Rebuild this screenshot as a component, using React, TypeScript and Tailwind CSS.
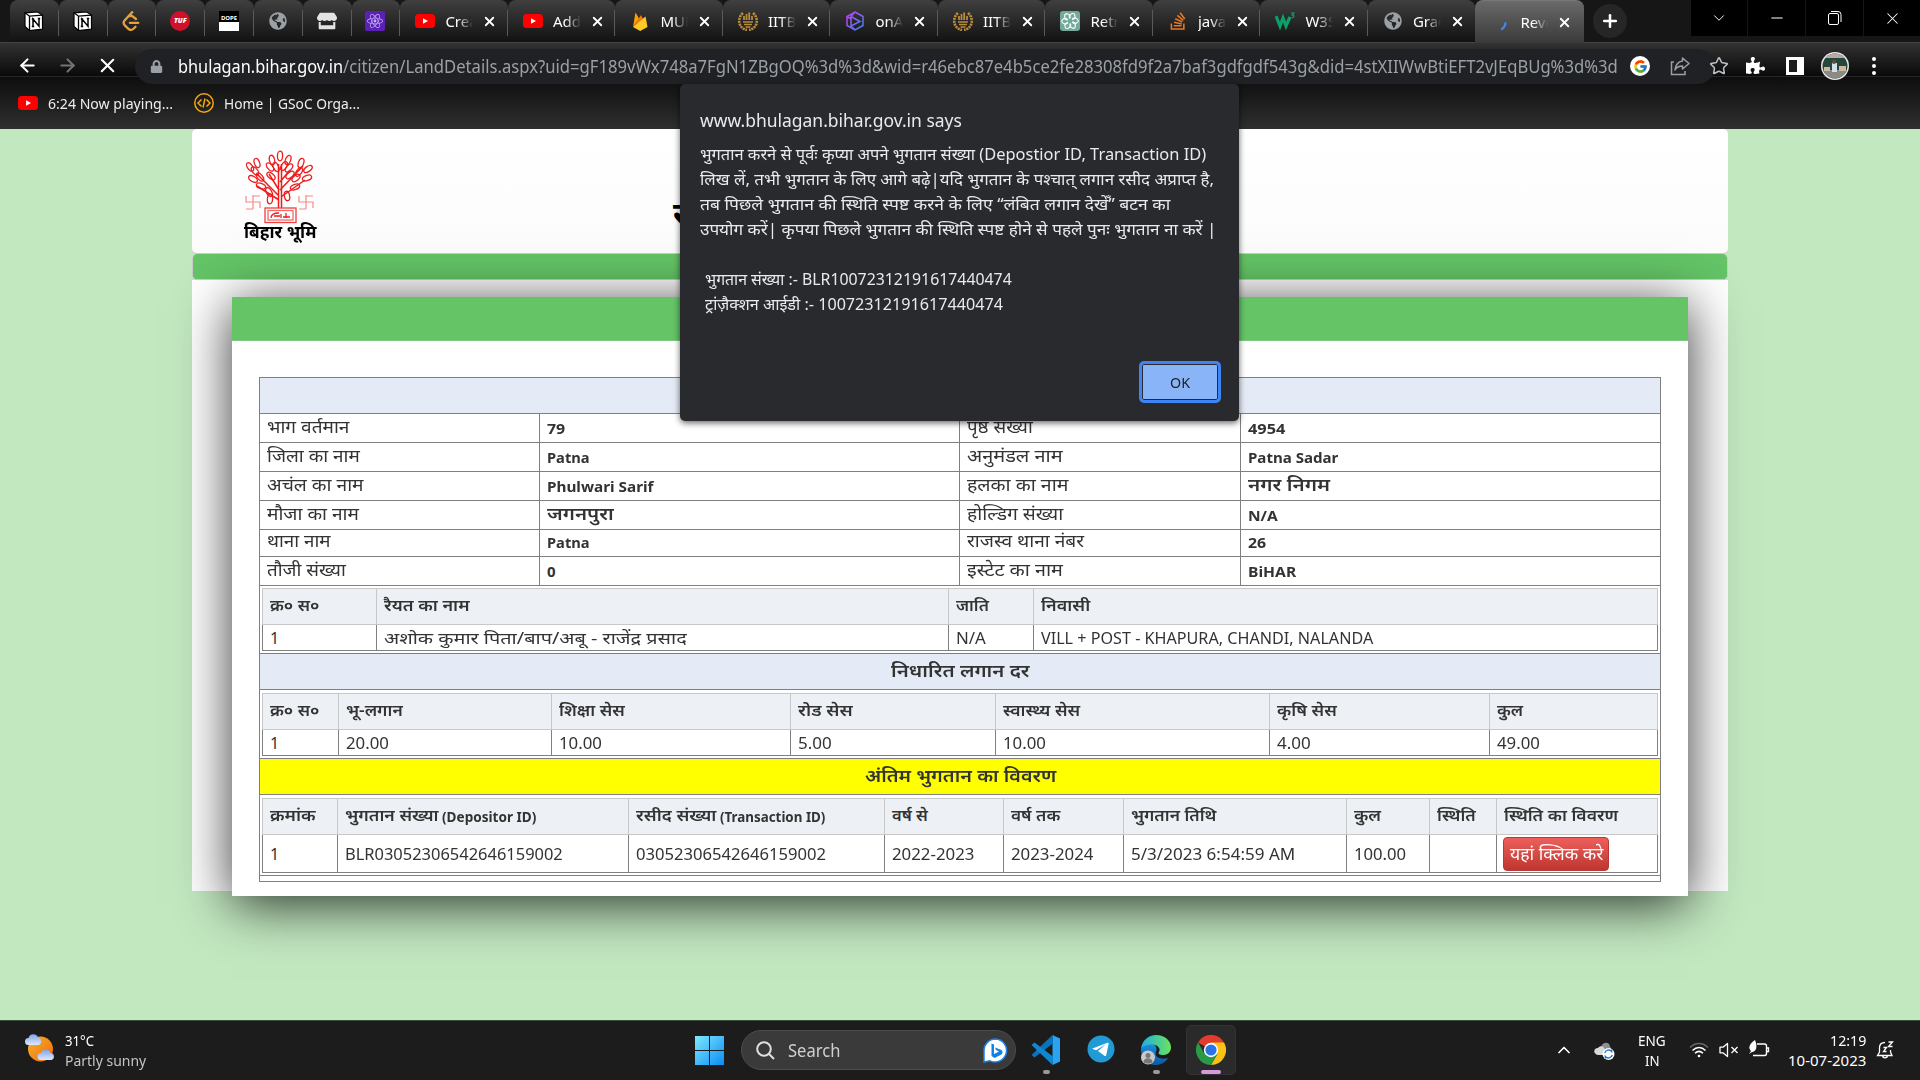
import { useLayoutEffect, useRef, useState, type ReactNode } from "react";
import { FcGoogle } from "react-icons/fc";
import { SiLeetcode } from "react-icons/si";
import { FaStackOverflow, FaReact, FaStore, FaGlobeAmericas, FaPuzzlePiece, FaLock } from "react-icons/fa";
import { ArrowLeft, ArrowRight, X, Star, ChevronDown, ChevronUp, Plus, Minus } from "lucide-react";

/* Single line of text squeezed or stretched to a fixed advance width. */
function Fit({ w, children, className = "" }: { w: number; children: ReactNode; className?: string }) {
  const ref = useRef<HTMLSpanElement>(null);
  const [scale, setScale] = useState(1);
  useLayoutEffect(() => {
    if (ref.current && ref.current.offsetWidth > 0) setScale(w / ref.current.offsetWidth);
  }, [w, children]);
  return (
    <span className={"inline-flex shrink-0 " + className} style={{ width: w }}>
      <span ref={ref} className="inline-block shrink-0 origin-left whitespace-nowrap" style={{ transform: `scaleX(${scale})` }}>
        {children}
      </span>
    </span>
  );
}

/* ---------- favicons ---------- */
const Notion = () => (
  <svg viewBox="0 0 20 20" className="size-5">
    <path d="M1 1.8 13.5.8 18.5 4.2V18.2L5.5 19.5 1 15.5Z" fill="#fff" stroke="#000" strokeWidth="1.2" />
    <path d="M1 1.8 5.5 5.2 18.5 4.2M5.5 5.2V19.5" stroke="#000" fill="none" strokeWidth="1.3" />
    <path d="M9 15.5V8L15 15.2V7.6M7.8 8H10.2M13.8 7.6H16.2M7.8 15.5H10.2" stroke="#000" fill="none" strokeWidth="1.5" />
  </svg>
);
const YouTube = () => (
  <svg viewBox="0 0 20 20" className="size-5 shrink-0">
    <rect x="0" y="3" width="20" height="14" rx="3.5" fill="#f00" />
    <path d="M8 7.2v5.6L13 10Z" fill="#fff" />
  </svg>
);
const Tuf = () => (
  <span className="flex size-5 items-center justify-center rounded-full bg-[#d0112b] text-[7px] font-black italic text-white">TUF</span>
);
const Dope = () => (
  <span className="flex h-5 w-5 flex-col bg-white">
    <span className="flex h-[11px] items-end justify-center bg-black text-[6px] leading-[7px] font-bold text-white">DOPE</span>
  </span>
);
const Firebase = () => (
  <svg viewBox="0 0 20 20" className="size-5">
    <path d="M3 16 5.5 1.5 9 7.5Z" fill="#ffa000" />
    <path d="M3 16 11 4 13 8Z" fill="#f57c00" />
    <path d="M3 16 15.5 5.5 17.5 16 10.2 20Z" fill="#ffca28" />
  </svg>
);
const Iitb = () => (
  <svg viewBox="0 0 20 20" className="size-5" fill="none" stroke="#b98b3c">
    <path d="M5 2C-1 7 0 17 9 19M15 2c6 5 5 15-4 17" strokeWidth="2.6" strokeDasharray="2.2 .7" />
    <path d="M6 9V5M8.5 9V3M11.2 9V1.5M14 9V5" strokeWidth="1.8" />
    <path d="M5 11h10M6 13.5h8M7.5 16h5" strokeWidth="1.3" />
  </svg>
);
const OnA = () => (
  <svg viewBox="0 0 20 20" className="size-5" fill="none" stroke="url(#oa)" strokeWidth="1.5">
    <defs>
      <linearGradient id="oa" x2="1" y2="1">
        <stop stopColor="#c43cf0" />
        <stop offset="1" stopColor="#3f86f7" />
      </linearGradient>
    </defs>
    <path d="M10 1 18 5.5V14.5L10 19 2 14.5V5.5Z" />
    <path d="M6 5.5 15 10.5 6 15ZM6 5.5 10 1M6 15l4 4M2 5.5 6 8" />
  </svg>
);
const Gpt = () => (
  <svg viewBox="0 0 20 20" className="size-5">
    <rect width="20" height="20" rx="3" fill="#74aa9c" />
    <g fill="none" stroke="#fff" strokeWidth="1.1">
      {[0, 60, 120, 180, 240, 300].map((a) => (
        <path key={a} d="M10 7.6V5.2a2.8 2.8 0 0 1 4.6-2l.6 3L12 8.2" transform={`rotate(${a} 10 10)`} />
      ))}
    </g>
  </svg>
);
const W3 = () => (
  <span className="flex w-5 items-start text-[#0d9f68]">
    <svg viewBox="0 0 20 20" className="size-5" fill="none" stroke="#0d9f68">
      <path d="M1 5 5 15 8 7l3 8L15 6" strokeWidth="3.2" />
      <path d="M16 2h3l-1.8 2c2.5 0 2.3 3-.7 2.5" strokeWidth="1.2" />
    </svg>
  </span>
);
const Globe = () => <FaGlobeAmericas className="size-[18px] text-[#9aa0a6]" />;
const Spinner = () => (
  <svg viewBox="0 0 20 20" className="size-5">
    <path d="M15.5 11c-.3 3-1.8 4.800-3.500 6" stroke="#4285f4" strokeWidth="2.200" fill="none" strokeLinecap="round" />
  </svg>
);

const pinned: ReactNode[] = [
  <Notion />,
  <Notion />,
  <SiLeetcode className="size-5 text-[#e8a13a]" />,
  <Tuf />,
  <Dope />,
  <Globe />,
  <FaStore className="size-5 text-[#e3e3e3]" />,
  <span className="flex size-5 items-center justify-center rounded-[2px] bg-[#5b21b6]">
    <FaReact className="size-4 text-[#c9b6f5]" />
  </span>,
];
const tabs: [ReactNode, string][] = [
  [<YouTube />, "Creat"],
  [<YouTube />, "Add t"],
  [<Firebase />, "MUN"],
  [<Iitb />, "IITBH"],
  [<OnA />, "onAu"],
  [<Iitb />, "IITBH"],
  [<Gpt />, "Retric"],
  [<FaStackOverflow className="size-5 text-[#e87922]" />, "javasc"],
  [<W3 />, "W3Sc"],
  [<Globe />, "Grad"],
];

function TabBody({ icon, label }: { icon: ReactNode; label: string }) {
  return (
    <>
      <span className="flex w-5 shrink-0 justify-center">{icon}</span>
      <span className="ml-[10px] w-7 overflow-hidden text-[15px] whitespace-nowrap text-white [mask-image:linear-gradient(90deg,#000_45%,transparent)]">
        {label}
      </span>
      <X className="ml-[9px] size-[15px] shrink-0 text-white" strokeWidth={2.900} />
    </>
  );
}

function TabStrip() {
  return (
    <div className="flex h-[42px] items-start bg-[#161616] pl-[10px]">
      {pinned.map((icon, i) => (
        <div key={i} className="flex h-[42px] w-[48.800px] items-center rounded-t-lg bg-linear-to-b from-[#404040] to-[#121212]">
          <span className="flex flex-1 justify-center">{icon}</span>
          <span className="mt-1 h-[26px] w-px bg-[#5a5a5a]" />
        </div>
      ))}
      {tabs.map(([icon, label], i) => (
        <div key={i} className="flex h-[42px] w-[107.500px] items-center rounded-t-lg bg-linear-to-b from-[#404040] to-[#121212] pl-[15px]">
          <TabBody icon={icon} label={label} />
          <span className={i === 9 ? "hidden" : "mt-1 ml-auto h-[26px] w-px bg-[#5a5a5a]"} />
        </div>
      ))}
      <div className="flex h-[43px] w-[109px] items-center rounded-t-lg border-t border-[#777] bg-linear-to-b from-[#6a6a6a] to-[#3a3a3a] pl-[15px]">
        <TabBody icon={<Spinner />} label="Reve" />
      </div>
      <div className="mt-1 ml-[9px] flex size-[34px] items-center justify-center rounded-full bg-[#262626]">
        <Plus className="size-5 text-white" strokeWidth={3} />
      </div>
      <div className="ml-auto flex h-9 gap-px bg-[#161616] text-white">
        <span className="flex w-[56px] items-center justify-center bg-black"><ChevronDown className="size-[18px]" strokeWidth={1.300} /></span>
        <span className="flex w-[57px] items-center justify-center bg-black"><Minus className="size-[18px]" strokeWidth={1.400} /></span>
        <span className="flex w-[57px] items-center justify-center bg-black">
          <svg viewBox="0 0 14 14" className="size-[14px]" fill="none" stroke="#fff">
            <rect x=".5" y="2.500" width="10" height="11" rx="1.500" />
            <path d="M3 .5h7a3 3 0 0 1 3 3v7.500" />
          </svg>
        </span>
        <span className="flex w-[56px] items-center justify-center bg-black"><X className="size-[19px]" strokeWidth={1.300} /></span>
      </div>
    </div>
  );
}

function Toolbar() {
  return (
    <div className="flex h-[34px] items-center border-t border-[#444] bg-linear-to-b from-[#333] to-[#0a0a0a]">
      <div className="flex items-center pt-[12px] pl-[17px]">
        <ArrowLeft className="size-[21px] text-white" strokeWidth={2.400} />
        <ArrowRight className="ml-[19px] size-[21px] text-[#757575]" strokeWidth={2.400} />
        <X className="ml-[18px] size-[23px] text-white" strokeWidth={2.200} />
      </div>
      <div className="relative z-10 mt-[13px] ml-[16px] flex h-[35px] w-[1580px] items-center rounded-full bg-[#202124]">
        <FaLock className="ml-[15px] size-[13px] text-[#9aa0a6]" />
        <Fit w={165} className="ml-[15px] text-[18px] text-white">bhulagan.bihar.gov.in</Fit>
        <Fit w={1275} className="text-[18px] text-[#9aa0a6]">
          /citizen/LandDetails.aspx?uid=gF189vWx748a7FgN1ZBgOQ%3d%3d&amp;wid=r46ebc87e4b5ce2fe28308fd9f2a7baf3gdfgdf543g&amp;did=4stXIIWwBtiEFT2vJEqBUg%3d%3d
        </Fit>
      </div>
      <div className="relative z-20 mt-[13px] -ml-[85px] flex w-[85px] items-center">
        <span className="flex size-5 shrink-0 items-center justify-center rounded-full bg-white"><FcGoogle className="size-[15px]" /></span>
        <svg viewBox="0 0 20 20" className="ml-[20px] size-5 shrink-0" fill="none" stroke="#9aa0a6" strokeWidth="1.500">
          <path d="M4 6H1.500v12.500H15V15" />
          <path d="M12.500 2 19 7.500 12.500 13V10C9 10 6.500 11 5 14c.2-4.500 3-8.500 7.500-9Z" strokeLinejoin="round" />
        </svg>
        <Star className="ml-[19px] size-5 shrink-0 text-[#bdc1c6]" strokeWidth={1.800} />
      </div>
      <div className="relative z-10 mt-[12px] ml-[31px] flex items-center">
        <FaPuzzlePiece className="size-[19px] text-white" />
        <span className="ml-[21px] flex h-[18px] w-[18px] bg-white p-[3px] pr-[7px]"><span className="flex-1 bg-[#1c1c1c]" /></span>
        <svg viewBox="0 0 28 28" className="ml-[17px] size-7">
          <clipPath id="av"><circle cx="14" cy="14" r="12.500" /></clipPath>
          <circle cx="14" cy="14" r="14" fill="#e8e8e8" />
          <g clipPath="url(#av)">
            <rect width="28" height="28" fill="#24483c" />
            <rect width="28" height="6" fill="#b8a8a8" />
            <rect y="18" width="28" height="10" fill="#8b8b85" />
            <rect x="11" y="11" width="5" height="9" fill="#d8dfe8" />
            <circle cx="13" cy="10" r="2" fill="#6b4a3a" />
            <path d="M3 15h6v4H3ZM18 14h7v5h-7Z" fill="#cdb9a0" />
          </g>
        </svg>
        <span className="ml-[23px] flex flex-col gap-[3px]">
          <i className="size-1 rounded-full bg-white" />
          <i className="size-1 rounded-full bg-white" />
          <i className="size-1 rounded-full bg-white" />
        </span>
      </div>
    </div>
  );
}

function Bookmarks() {
  return (
    <div className="flex h-[53px] items-center border-t border-[#262626] bg-linear-to-b from-[#0e0e0e] to-[#2f2f2f] pl-[18px] text-[15px] text-[#eee]">
      <YouTube />
      <Fit w={125} className="ml-[10px]">6:24 Now playing...</Fit>
      <svg viewBox="0 0 20 20" className="ml-[21px] size-5" fill="none" stroke="#f5a70c" strokeWidth="1.500">
        <circle cx="10" cy="10" r="9.200" />
        <path d="M7.500 6.500 4 10l3.500 3.500M12.500 6.500 16 10l-3.500 3.500M11 5.500 9 14.500" />
      </svg>
      <Fit w={136} className="ml-[10px]">Home | GSoC Orga...</Fit>
    </div>
  );
}

/* ---------- page ---------- */
const leaves: [number, number, number][] = [
  [35, 6, 0], [27, 10, -15], [43, 10, 20], [25, 17, -40], [44, 18, 40], [26, 26, -50], [45, 25, 50], [12, 13, -20],
  [5, 17, -35], [10, 21, -40], [8, 29, -60], [16, 36, -70], [56, 13, 20], [63, 19, 55], [54, 22, 35], [62, 28, 70],
  [51, 28, 50], [50, 37, 70], [24, 42, -30], [25, 49, 5], [42, 46, -10], [15, 27, -40], [39, 16, 30], [31, 17, -25],
];
function BiharLogo() {
  return (
    <div className="flex w-[74px] flex-col items-center">
      <svg viewBox="0 0 70 74" className="h-[74px] w-[70px]" fill="none" stroke="#ee1c1c" strokeWidth="1.300">
        <path d="M33.500 58V14M36.500 58V14M34 46 12 24M34 40 24 24M35 40 58 16M36 47 60 30M35 32 45 20M34 50 12 36" strokeWidth="1.500" />
        {leaves.map(([x, y, r], i) => (
          <ellipse key={i} cx={x} cy={y} rx="2.600" ry="4.800" transform={`rotate(${r} ${x} ${y})`} />
        ))}
        <rect x="20" y="58" width="31" height="14.500" stroke="#f04040" />
        <rect x="23" y="60.500" width="25" height="9.500" stroke="#f46a6a" />
        <path d="M26 68c0-4 3-5 8-5M36 64v4M29 66h6M38 67h7M41 63v5" />
        <g stroke="#f58a8a" strokeWidth="1.200">
          <path d="M1 46v6h14v6M8 45v14M1 59h7M8 46h7" />
          <path d="M54 46v6h14v6M61 45v14M54 59h7M61 46h7" />
        </g>
      </svg>
      <Fit w={72} className="mt-[-1px] text-[17px] leading-[18px] font-bold text-black">बिहार भूमि</Fit>
    </div>
  );
}

type Txt = [string, number];
const info: [Txt, Txt, Txt, Txt][] = [
  [["भाग वर्तमान", 83], ["79", 18], ["पृष्ठ संख्या", 66], ["4954", 37]],
  [["जिला का नाम", 92.5], ["Patna", 43], ["अनुमंडल नाम", 96], ["Patna Sadar", 90.5]],
  [["अचंल का नाम", 97], ["Phulwari Sarif", 106], ["हलका का नाम", 101], ["नगर निगम", 82.5]],
  [["मौजा का नाम", 92], ["जगनपुरा", 67], ["होल्डिग संख्या", 96], ["N/A", 30]],
  [["थाना नाम", 64], ["Patna", 43], ["राजस्व थाना नंबर", 117], ["26", 18]],
  [["तौजी संख्या", 78.5], ["0", 9], ["इस्टेट का नाम", 95.5], ["BiHAR", 48]],
];

function Section({ text, w, tint }: { text: string; w: number; tint: string }) {
  return (
    <div className={"flex h-9 items-center justify-center border-r border-b border-[#808080] text-[18px] font-semibold " + tint}>
      {text ? <Fit w={w} className="-mt-[3px]">{text}</Fit> : null}
    </div>
  );
}

function SubTable({ cols, head, row, rowH }: { cols: string; head: ReactNode[]; row: ReactNode[]; rowH: string }) {
  return (
    <div className="border-r border-b border-[#808080] pt-[3px] pr-[2px] pb-[2px] pl-[2px]">
      <div className={"grid border-t border-l border-[#c8c8c8] bg-[#edf1f6] " + cols}>
        {head.map((c, i) => (
          <div key={i} className="flex h-9 items-center border-r border-b border-[#c8c8c8] pb-[3px] pl-[7px] text-[16.500px] font-semibold">{c}</div>
        ))}
      </div>
      <div className={"grid border-l border-[#808080] " + cols}>
        {row.map((c, i) => (
          <div key={i} className={"flex items-center border-r border-b border-[#808080] pl-[7px] text-[16px] " + rowH}>{c}</div>
        ))}
      </div>
    </div>
  );
}

function LandTable() {
  return (
    <div className="w-[1402px] border-t border-l border-[#808080] text-[#333]">
      <Section text="" w={0} tint="bg-[#e4ebf6]" />
      {info.map((r, i) => (
        <div key={i} className={"grid grid-cols-[280px_420px_281px_420px] " + (i % 2 ? "h-7" : "h-[29px]")}>
          {r.map(([t, w], j) => (
            <div key={j} className={"flex items-center border-r border-b border-[#808080] pl-[7px] " + (j % 2 ? (/[a-zA-Z0-9]/.test(t) ? "pt-[1px] text-[15px] font-bold" : "pb-[2px] text-[18px] font-semibold") : "pb-[2px] text-[17px]")}>
              <Fit w={w}>{t}</Fit>
            </div>
          ))}
        </div>
      ))}
      <SubTable
        cols="grid-cols-[114px_572px_85px_624px]"
        rowH="h-[26px]"
        head={[<Fit w={49}>क्र० स०</Fit>, <Fit w={85}>रैयत का नाम</Fit>, <Fit w={33}>जाति</Fit>, <Fit w={49}>निवासी</Fit>]}
        row={[<Fit w={9}>1</Fit>, <Fit w={303}>अशोक कुमार पिता/बाप/अबू - राजेंद्र प्रसाद</Fit>, <Fit w={29.5}>N/A</Fit>, <Fit w={332}>VILL + POST - KHAPURA, CHANDI, NALANDA</Fit>]}
      />
      <Section text="निधारित लगान दर" w={139} tint="bg-[#e4ebf6]" />
      <SubTable
        cols="grid-cols-[76px_213px_239px_205px_274px_220px_168px]"
        rowH="h-[26px]"
        head={[<Fit w={49}>क्र० स०</Fit>, <Fit w={57}>भू-लगान</Fit>, <Fit w={66}>शिक्षा सेस</Fit>, <Fit w={55}>रोड सेस</Fit>, <Fit w={77}>स्वास्थ्य सेस</Fit>, <Fit w={60}>कृषि सेस</Fit>, <Fit w={26}>कुल</Fit>]}
        row={[<Fit w={9}>1</Fit>, <Fit w={43}>20.00</Fit>, <Fit w={43}>10.00</Fit>, <Fit w={34}>5.00</Fit>, <Fit w={43}>10.00</Fit>, <Fit w={34}>4.00</Fit>, <Fit w={43}>49.00</Fit>]}
      />
      <Section text="अंतिम भुगतान का विवरण" w={191} tint="bg-[#ffff00]" />
      <SubTable
        cols="grid-cols-[75px_291px_256px_119px_120px_223px_83px_67px_161px]"
        rowH="h-[38px]"
        head={[
          <Fit w={46}>क्रमांक</Fit>,
          <><Fit w={93}>भुगतान संख्या</Fit><Fit w={94} className="mt-[2px] ml-1 text-[14px] font-bold">(Depositor ID)</Fit></>,
          <><Fit w={80}>रसीद संख्या</Fit><Fit w={105} className="mt-[2px] ml-1 text-[14px] font-bold">(Transaction ID)</Fit></>,
          <Fit w={36}>वर्ष से</Fit>,
          <Fit w={49}>वर्ष तक</Fit>,
          <Fit w={85}>भुगतान तिथि</Fit>,
          <Fit w={27}>कुल</Fit>,
          <Fit w={39}>स्थिति</Fit>,
          <Fit w={114}>स्थिति का विवरण</Fit>,
        ]}
        row={[
          <Fit w={9}>1</Fit>,
          <Fit w={218}>BLR03052306542646159002</Fit>,
          <Fit w={190}>03052306542646159002</Fit>,
          <Fit w={82}>2022-2023</Fit>,
          <Fit w={82}>2023-2024</Fit>,
          <Fit w={164}>5/3/2023 6:54:59 AM</Fit>,
          <Fit w={52}>100.00</Fit>,
          null,
          <button className="-ml-px flex h-[34px] w-[106px] items-center justify-center rounded border border-[#b93a35] bg-linear-to-b from-[#ee5f5b] to-[#bd362f] text-[17px] text-white">
            <Fit w={93}>यहां क्लिक करे</Fit>
          </button>,
        ]}
      />
      <div className="h-[6px] border-r border-b border-[#808080]" />
    </div>
  );
}

function Page() {
  return (
    <main className="flex h-[891px] flex-col items-center overflow-hidden bg-[#c2e8c0]">
      <header className="flex h-[125px] w-[1536px] shrink-0 items-start rounded-[5px] border-b border-[#ccc] bg-linear-to-b from-white to-[#fcfcfc] pt-[21px] pl-[51px]">
        <BiharLogo />
        <span className="mt-[37px] ml-[356px] text-[34px] leading-[52px] font-bold text-black">र</span>
      </header>
      <div className="h-[26px] w-[1536px] shrink-0 rounded-[5px] border border-t-0 border-[#ccc] bg-[#64c466]" />
      <div className="flex h-[611px] w-[1536px] shrink-0 justify-center bg-white pt-[17px]">
        <section className="h-[599px] w-[1456px] bg-white shadow-[0_8px_50px_rgba(0,0,0,.8)]">
          <div className="h-11 border-b border-[#7cc87c] bg-[#64c466]" />
          <div className="pt-9 pl-[27px]"><LandTable /></div>
        </section>
      </div>
    </main>
  );
}

const message: [string, number, string][] = [
  ["भुगतान करने से पूर्वः कृप्या अपने भुगतान संख्या (Depostior ID, Transaction ID)", 506, ""],
  ["लिख लें, तभी भुगतान के लिए आगे बढ़े|यदि भुगतान के पश्चात् लगान रसीद अप्राप्त है,", 514, ""],
  ["तब पिछले भुगतान की स्थिति स्पष्ट करने के लिए “लंबित लगान देखेँ” बटन का", 470, ""],
  ["उपयोग करें| कृपया पिछले भुगतान की स्थिति स्पष्ट होने से पहले पुनः भुगतान ना करें |", 517, ""],
  ["भुगतान संख्या :- BLR10072312191617440474", 307, "mt-[25px] ml-[5px]"],
  ["ट्रांज़ैक्शन आईडी :- 10072312191617440474", 298, "ml-[5px]"],
];
function Alert() {
  return (
    <div className="absolute top-[84px] left-[680px] z-30 flex h-[337px] w-[559px] flex-col rounded-[5px] bg-[#292a2d] pt-[21px] pr-[18px] pl-5 text-[#e8eaed] shadow-[0_2px_6px_rgba(0,0,0,.6)]">
      <Fit w={262} className="h-[30px] text-[18px] leading-[30px]">www.bhulagan.bihar.gov.in says</Fit>
      <div className="mt-[7px] flex flex-col text-[16px]">
        {message.map(([t, w, c]) => (
          <Fit key={t} w={w} className={"h-[25px] leading-[25px] " + c}>{t}</Fit>
        ))}
      </div>
      <button className="mt-[44px] ml-auto flex h-[42px] w-[82px] items-center justify-center rounded-[5px] border-[3px] border-[#3f84f3] bg-[#8ab4f8] text-[15px] text-[#202124] shadow-[inset_0_0_0_1px_#292a2d]">
        <Fit w={20}>OK</Fit>
      </button>
    </div>
  );
}

/* ---------- taskbar ---------- */
const Weather = () => (
  <svg viewBox="0 0 30 30" className="size-[30px]">
    <defs>
      <linearGradient id="sun" x2="1" y2="1"><stop stopColor="#f7b52c" /><stop offset="1" stopColor="#f0680c" /></linearGradient>
      <linearGradient id="cl" x2="0" y2="1"><stop stopColor="#7fa3ea" /><stop offset="1" stopColor="#dfe8fb" /></linearGradient>
    </defs>
    <circle cx="15.500" cy="16" r="12.500" fill="url(#sun)" />
    <path d="M3.500 12a3.500 3.500 0 0 1 0-7A5 5 0 0 1 13 4.500a4 4 0 0 1 1 7.500Z" fill="url(#cl)" />
    <path d="M16 27a3.500 3.500 0 0 1 0-7 5 5 0 0 1 9.500 0 3.600 3.600 0 0 1 1 7Z" fill="url(#cl)" />
  </svg>
);
const Windows = () => (
  <svg viewBox="0 0 29 29" className="size-[29px]">
    <defs>
      <linearGradient id="win" gradientUnits="userSpaceOnUse" x2="29" y2="29"><stop stopColor="#7fe9ff" /><stop offset="1" stopColor="#0a8cf5" /></linearGradient>
    </defs>
    <path d="M0 0h14v14H0ZM15 0h14v14H15ZM0 15h14v14H0ZM15 15h14v14H15Z" fill="url(#win)" />
  </svg>
);
const Bing = () => (
  <svg viewBox="0 0 25 25" className="size-[25px]">
    <path d="M12.500 1A11.500 11.500 0 1 1 7 22.800L1 24V12.500A11.500 11.500 0 0 1 12.500 1Z" fill="#fff" stroke="#1f7fe8" strokeWidth="1.500" />
    <path d="M8.500 5.500 11 6.500V16l5-2.500-3-1.500-1-2.500 6 2.200c2 1 2 4 0 5L11.500 20 8.500 18Z" fill="#1480e0" />
  </svg>
);
const VsCode = () => (
  <svg viewBox="0 0 30 30" className="size-[30px]">
    <path d="M21.500 0 29 3.500V26.500L21.500 30Z" fill="#2aa3f0" />
    <path d="M22 8.500 3.500 22.500.5 20 21.500 0Z" fill="#0a73bd" />
    <path d="M22 21.500 3.500 7.500.5 10 21.500 30Z" fill="#1187d2" />
  </svg>
);
const Telegram = () => (
  <svg viewBox="0 0 28 28" className="size-7">
    <circle cx="14" cy="14" r="13.500" fill="#229ad6" />
    <path d="M5.500 13.600 20.500 7.800c.8-.2 1.300.2 1.100 1.200L19.200 20.200c-.2 1-.8 1.100-1.500.7L11 16l8-7-9.800 6.200-3.600-1.100Z" fill="#fff" />
  </svg>
);
const Edge = () => (
  <svg viewBox="0 0 30 30" className="size-[30px]">
    <defs>
      <linearGradient id="e1" x2="1"><stop stopColor="#1eaee5" /><stop offset="1" stopColor="#6be35a" /></linearGradient>
      <linearGradient id="e2" x2="0" y2="1"><stop stopColor="#1a8fe0" /><stop offset="1" stopColor="#0c59a4" /></linearGradient>
    </defs>
    <path d="M0 14C2 8 8 8 11 9c5 1 5 5 4 8-2 5 4 8 12 6-4 7-13 9-20 5C2 25 0 20 0 14Z" fill="url(#e2)" />
    <path d="M0 14C1 5 8 0 15 0c9 0 15 6 15 12.500 0 5-4 7.500-8 7.500-3 0-5.500-1.200-4-3 2-3-1-7.500-7-7.500C6 9.500 1.500 11 0 14Z" fill="url(#e1)" />
    <circle cx="7" cy="22.500" r="7" fill="#c9c9c9" />
    <circle cx="7" cy="20.500" r="2.500" fill="#777" />
    <path d="M2.500 27c0-5 9-5 9 0-2 2-7 2-9 0Z" fill="#777" />
  </svg>
);
const Chrome = () => (
  <svg viewBox="0 0 30 30" className="size-[30px]">
    <path d="M15 15 2 7.500A15 15 0 0 1 28 7.500Z" fill="#e33b2e" />
    <path d="M15 7.500h13A15 15 0 0 1 15 30l6.500-11.300Z" fill="#fbc116" />
    <path d="M2 7.500A15 15 0 0 0 15 30l6.500-11.300L15 15 8.500 18.700Z" fill="#2b9a48" />
    <circle cx="15" cy="15" r="7.200" fill="#fff" />
    <circle cx="15" cy="15" r="5.600" fill="#2b74e8" />
  </svg>
);

function Taskbar() {
  return (
    <footer className="flex h-[60px] border-t border-[#3f4a3f] bg-[#1c1c1c] text-[15px] leading-5 text-white">
      <div className="flex w-[695px] items-start pt-[9px] pl-[25px]">
        <span className="pt-[3px]"><Weather /></span>
        <div className="ml-[10px] flex flex-col">
          <Fit w={29}>31°C</Fit>
          <Fit w={81} className="text-[#c4c4c4]">Partly sunny</Fit>
        </div>
      </div>
      <div className="flex items-start">
        <span className="mt-[15px]"><Windows /></span>
        <div className="mt-[9px] ml-[17px] flex h-10 w-[275px] items-center rounded-full border border-[#4c4c4c] bg-[#3a3a3a] pr-[7px] pl-[14px]">
          <svg viewBox="0 0 19 19" className="size-[19px]" fill="none" stroke="#e0e0e0" strokeWidth="2">
            <circle cx="8" cy="8" r="6.800" />
            <path d="m13 13 5 5" />
          </svg>
          <Fit w={52} className="ml-[13px] text-[17.500px] text-[#cfcfcf]">Search</Fit>
          <span className="ml-auto"><Bing /></span>
        </div>
        <div className="ml-[15px] flex w-[30px] flex-col items-center pt-[14px]">
          <VsCode /><i className="mt-[5px] h-1 w-[7px] rounded-full bg-[#999]" />
        </div>
        <div className="ml-[26px] pt-[14px]"><Telegram /></div>
        <div className="ml-[26px] flex w-[30px] flex-col items-center pt-[14px]">
          <Edge /><i className="mt-[5px] h-1 w-[7px] rounded-full bg-[#999]" />
        </div>
        <div className="mt-1 ml-[15px] flex h-[50px] w-[50px] flex-col items-center rounded-[5px] border border-[#333] bg-[#2a2a2a] pt-[9px]">
          <Chrome /><i className="mt-[5px] h-1 w-5 shrink-0 rounded-full bg-[#d898dc]" />
        </div>
      </div>
      <div className="ml-auto flex items-start pr-[26px]">
        <ChevronUp className="mt-[19px] size-5" strokeWidth={2} />
        <svg viewBox="0 0 21 18" className="mt-[21px] ml-[20px] h-[18px] w-[21px]">
          <path d="M7 5C9-1 16 0 16 5c2 1 2 5 0 6H5Z" fill="#8f8f8f" />
          <path d="M4 13C-1 12-1 6 4 6c2-3 6-2 6.500 1L13 13Z" fill="#d8d8d8" />
          <circle cx="14.500" cy="12" r="6" fill="#fff" />
          <path d="M10.700 11a4 4 0 0 1 7-1.500V7.500M18.300 13a4 4 0 0 1-7 1.500v2" stroke="#1a73c8" strokeWidth="1.300" fill="none" />
        </svg>
        <div className="mt-[9px] ml-[23px] flex w-7 flex-col items-center">
          <Fit w={28}>ENG</Fit>
          <Fit w={15}>IN</Fit>
        </div>
        <svg viewBox="0 0 20 16" className="mt-[21px] ml-[23px] h-4 w-5" fill="none" stroke="#fff" strokeWidth="1.500">
          <path d="M1 5.500C6 0 14 0 19 5.500" stroke="#666" />
          <path d="M3.500 8.500c4-4 9-4 13 0M6 11.300c2.500-2.500 5.500-2.500 8 0" />
          <circle cx="10" cy="14" r="1.300" fill="#fff" stroke="none" />
        </svg>
        <svg viewBox="0 0 20 16" className="mt-[21px] ml-[10px] h-4 w-5" fill="none" stroke="#fff" strokeWidth="1.300">
          <path d="M1 5.200h3L8.500 1.500v13L4 10.800H1Z" strokeLinejoin="round" />
          <path d="m12.500 5 6 6m0-6-6 6" />
        </svg>
        <svg viewBox="0 0 22 17" className="mt-[19px] ml-[9px] h-[17px] w-[22px]" fill="none" stroke="#fff" strokeWidth="1.400">
          <path d="M9 4h7.500a2 2 0 0 1 2 2v7.500a2 2 0 0 1-2 2H5M19 8h1.500v3.500H19" />
          <path d="M7 0C1 4 0 8 3 11l-2 3 3-2c4 0 6-5 3-12Z" fill="#fff" stroke="none" />
        </svg>
        <div className="mt-[9px] ml-[18px] flex flex-col items-end">
          <Fit w={36}>12:19</Fit>
          <Fit w={78}>10-07-2023</Fit>
        </div>
        <svg viewBox="0 0 18 18" className="mt-[20px] ml-[10px] size-[18px]" fill="none" stroke="#fff" strokeWidth="1.300">
          <path d="M9 1.500C5 1.500 3.500 4 3.500 7v4L1.500 14.500h14.500L14.500 11V9M6.500 15c.5 2.500 4.500 2.500 5 0M7.500 6.500h3l-3 4h3M12.500 1h4l-4 4.500h4" />
        </svg>
      </div>
    </footer>
  );
}

export default function App() {
  return (
    <div className="relative h-[1080px] w-[1920px] overflow-hidden font-['Noto_Sans','Open_Sans',sans-serif]">
      <TabStrip />
      <Toolbar />
      <Bookmarks />
      <Page />
      <Taskbar />
      <Alert />
    </div>
  );
}
